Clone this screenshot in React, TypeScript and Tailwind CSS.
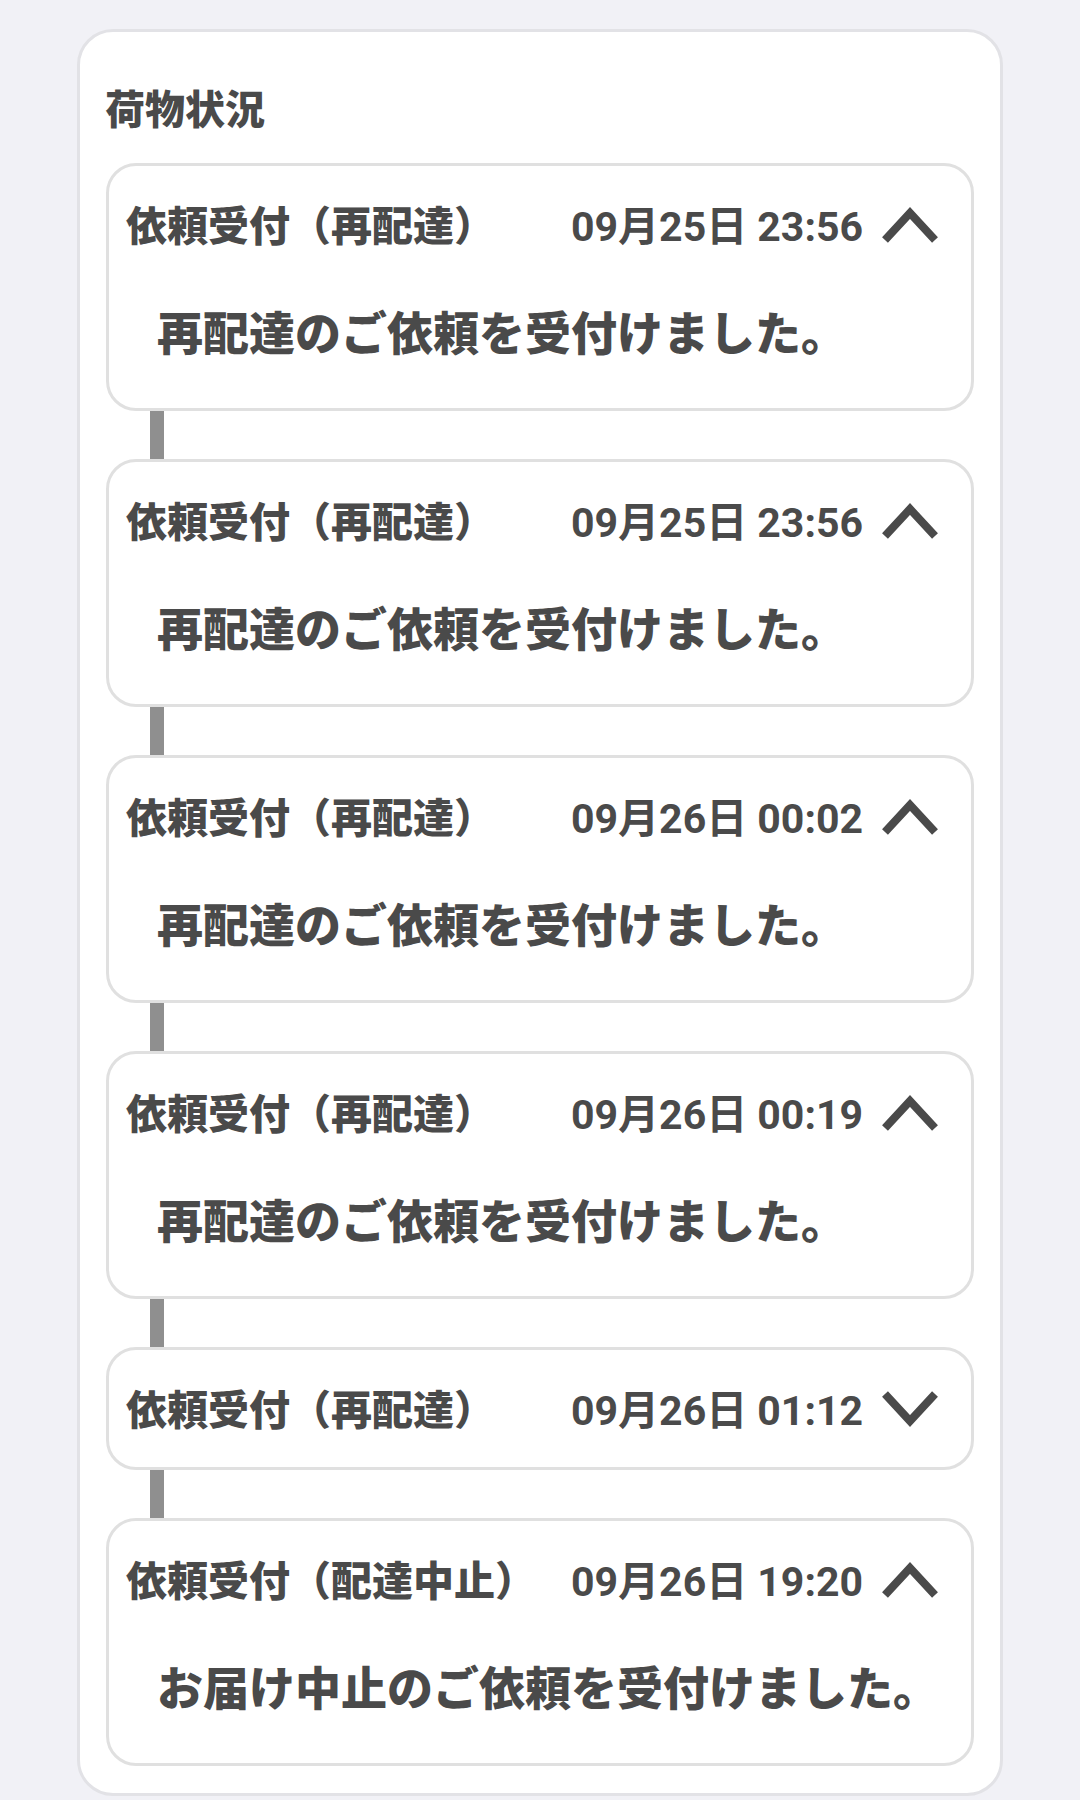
import React from 'react';

type Entry = {
    title: string;
    date: string;
    open: boolean;
    body?: string;
};

const entries: Entry[] = [
    { title: '依頼受付（再配達）', date: '09月25日 23:56', open: true, body: '再配達のご依頼を受付けました。' },
    { title: '依頼受付（再配達）', date: '09月25日 23:56', open: true, body: '再配達のご依頼を受付けました。' },
    { title: '依頼受付（再配達）', date: '09月26日 00:02', open: true, body: '再配達のご依頼を受付けました。' },
    { title: '依頼受付（再配達）', date: '09月26日 00:19', open: true, body: '再配達のご依頼を受付けました。' },
    { title: '依頼受付（再配達）', date: '09月26日 01:12', open: false },
    { title: '依頼受付（配達中止）', date: '09月26日 19:20', open: true, body: 'お届け中止のご依頼を受付けました。' },
];

const Chevron: React.FC<{ up: boolean }> = ({ up }) => (
    <svg width="58" height="42" viewBox="0 0 58 42" className="shrink-0">
        <polyline
            points={up ? '4,36 29,9 54,36' : '4,6 29,33 54,6'}
            fill="none"
            stroke="#4a4a4a"
            strokeWidth="8"
            strokeLinejoin="miter"
        />
    </svg>
);

const StatusCard: React.FC<{ entry: Entry }> = ({ entry }) => (
    <div className="bg-white border-[3px] border-[#e0e0e0] rounded-[30px]">
        <div className="h-[117px] flex items-center pl-[17px] pr-[32px] pt-[5px]">
            <span className="text-[41px] leading-none font-black">{entry.title}</span>
            <span className="ml-auto text-[41px] leading-none font-bold">{entry.date}</span>
            <span className="ml-[18px] -mt-[4px]">
                <Chevron up={entry.open} />
            </span>
        </div>
        {entry.open && (
            <div className="pl-[48px] pt-[18px] pb-[41px] text-[46px] leading-[66px] font-black">
                {entry.body}
            </div>
        )}
    </div>
);

const App: React.FC = () => {
    return (
        <div
            className="min-h-[1800px] bg-[#f1f1f6] pt-[29px] px-[77px] text-[#4a4a4a]"
            style={{ fontFamily: 'Roboto, "Noto Sans CJK JP", sans-serif' }}
        >
            <div className="bg-white border-[3px] border-[#e2e2e6] rounded-[36px] px-[26px] pt-[60px] pb-[27px]">
                {/* Header */}
                <h2 className="text-[40px] leading-[38px] font-black mb-[33px] -ml-[1px]">荷物状況</h2>

                {/* Timeline */}
                <div className="flex flex-col">
                    {entries.map((e, i) => (
                        <React.Fragment key={i}>
                            {i > 0 && <div className="w-[14px] h-[48px] ml-[44px] bg-[#8f8f8f]"></div>}
                            <StatusCard entry={e} />
                        </React.Fragment>
                    ))}
                </div>
            </div>
        </div>
    );
};

export default App;
